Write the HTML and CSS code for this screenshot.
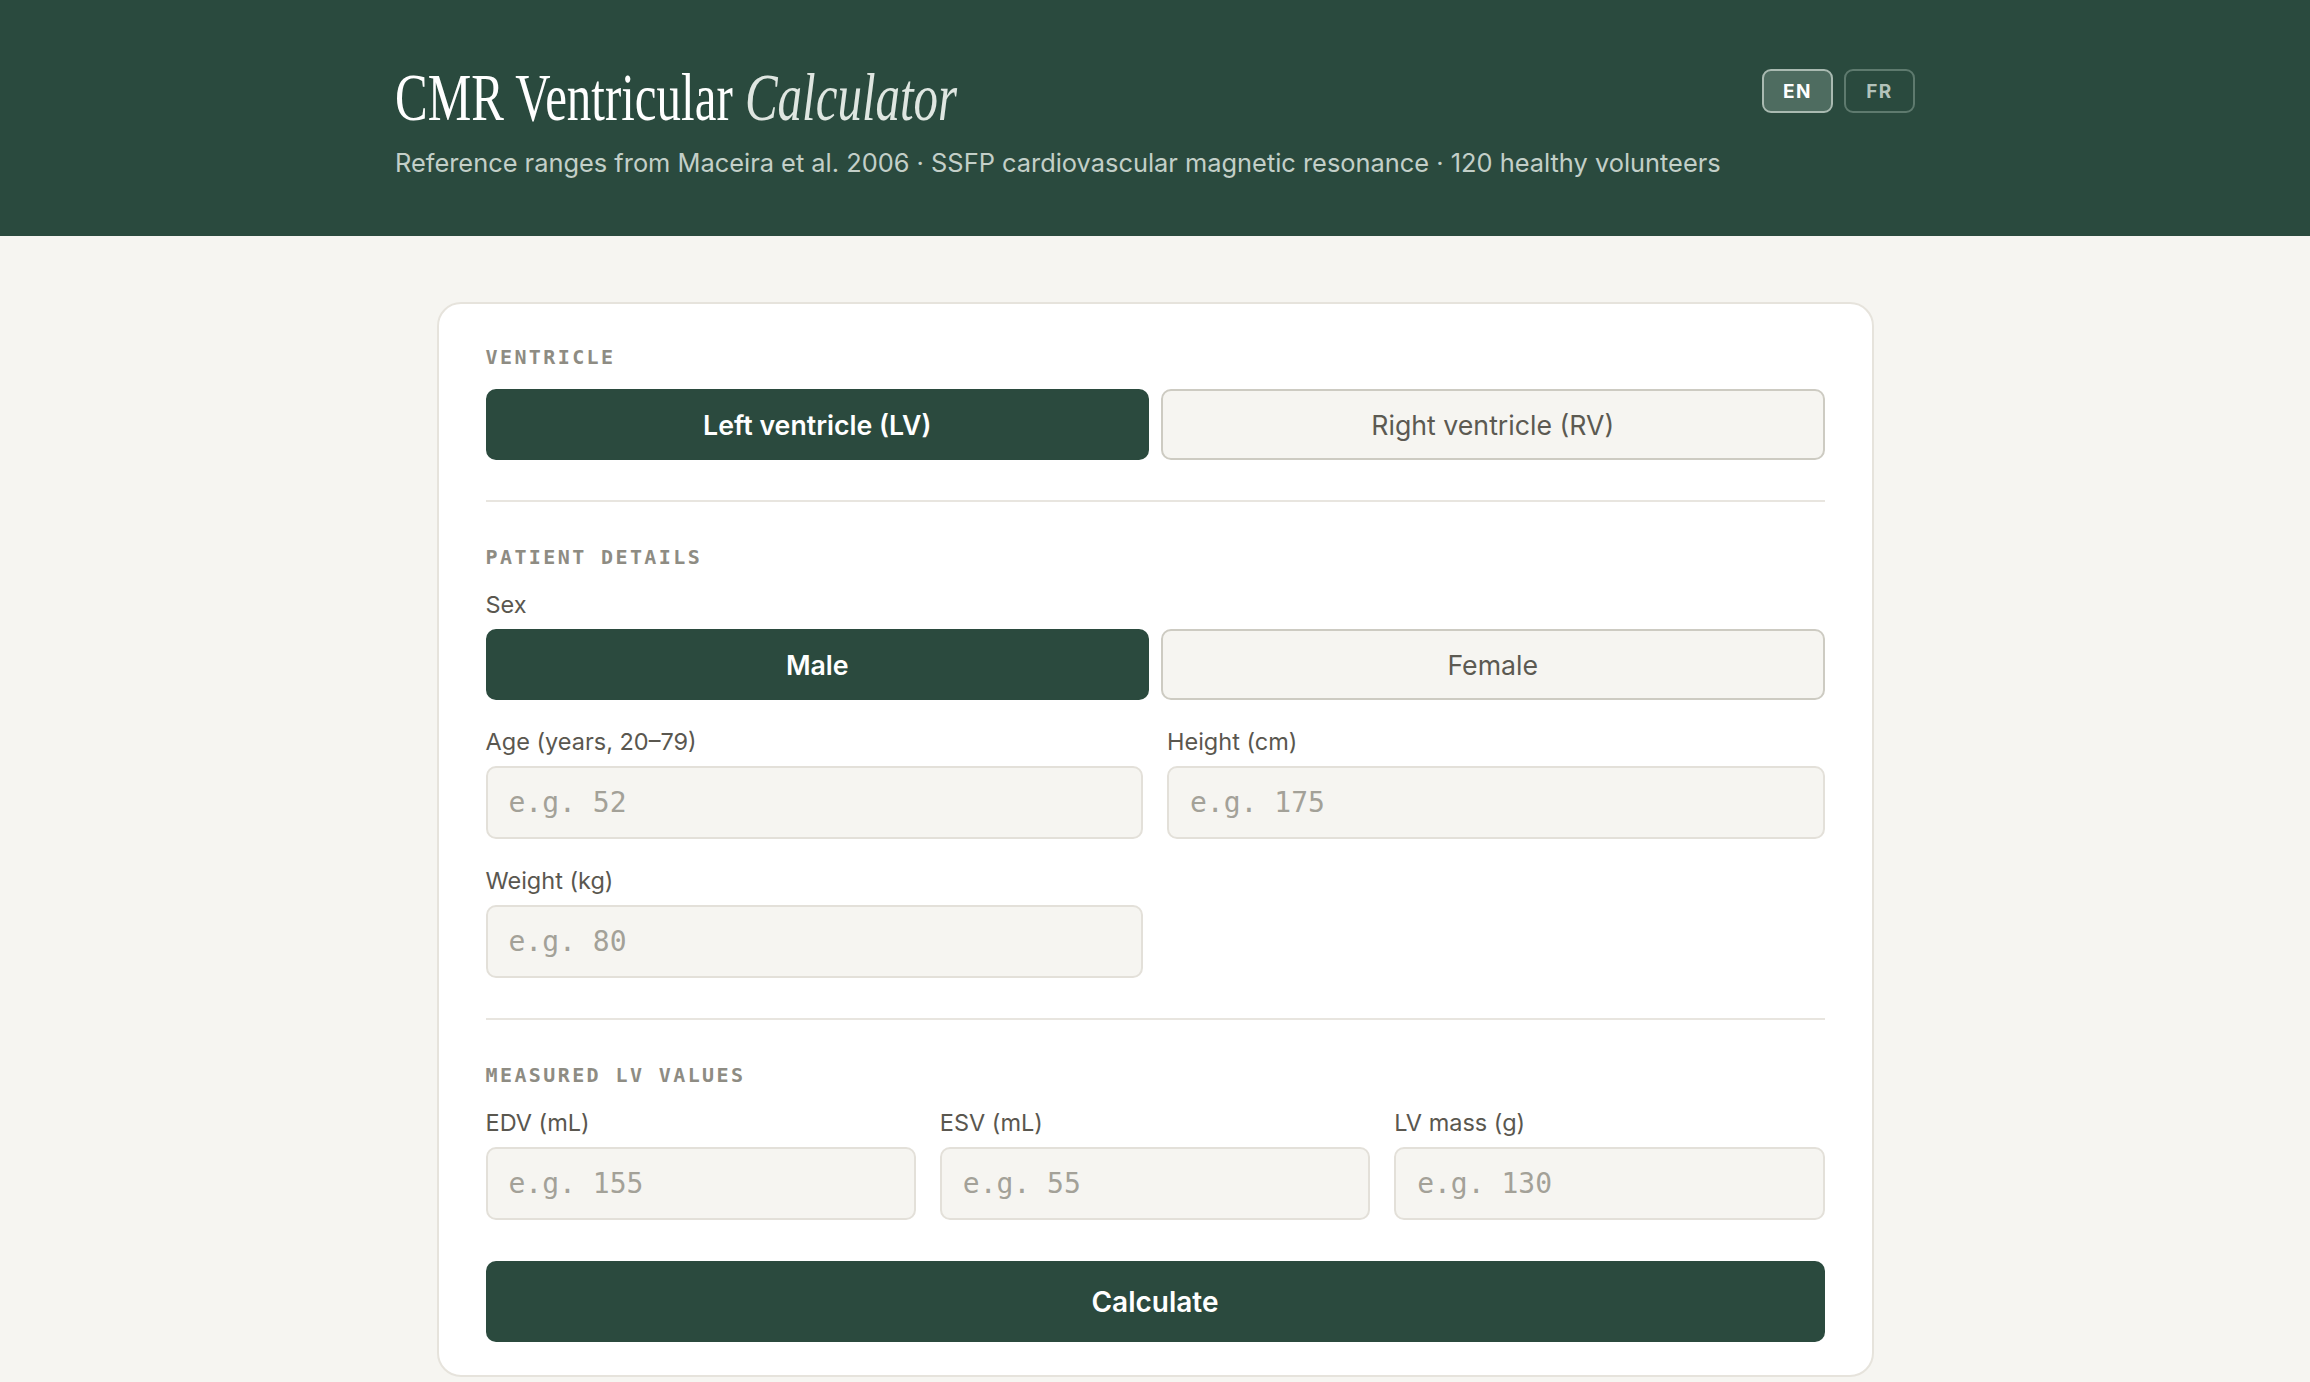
FILE: index.html
```html
<!DOCTYPE html>
<html lang="en">
<head>
<meta charset="utf-8">
<title>CMR Ventricular Calculator</title>
<link rel="stylesheet" href="styles.css">
</head>
<body>
<header class="top">
  <div class="top-inner">
    <div class="brand">
      <h1 class="title"><span class="title-text">CMR Ventricular <em>Calculator</em></span></h1>
      <p class="subtitle">Reference ranges from Maceira et al. 2006 · SSFP cardiovascular magnetic resonance · 120 healthy volunteers</p>
    </div>
    <div class="lang">
      <button class="lang-btn is-active">EN</button>
      <button class="lang-btn">FR</button>
    </div>
  </div>
</header>
<main class="main">
  <section class="card">
    <div class="section-label">VENTRICLE</div>
    <div class="toggle">
      <button class="toggle-btn is-active">Left ventricle (LV)</button>
      <button class="toggle-btn">Right ventricle (RV)</button>
    </div>
    <div class="divider"></div>
    <div class="section-label">PATIENT DETAILS</div>
    <div class="field-label">Sex</div>
    <div class="toggle">
      <button class="toggle-btn is-active">Male</button>
      <button class="toggle-btn">Female</button>
    </div>
    <div class="grid grid-2">
      <label class="field">
        <span class="field-label">Age (years, 20–79)</span>
        <input class="input" type="text" placeholder="e.g. 52">
      </label>
      <label class="field">
        <span class="field-label">Height (cm)</span>
        <input class="input" type="text" placeholder="e.g. 175">
      </label>
      <label class="field">
        <span class="field-label">Weight (kg)</span>
        <input class="input" type="text" placeholder="e.g. 80">
      </label>
    </div>
    <div class="divider"></div>
    <div class="section-label">MEASURED LV VALUES</div>
    <div class="grid grid-3">
      <label class="field">
        <span class="field-label">EDV (mL)</span>
        <input class="input" type="text" placeholder="e.g. 155">
      </label>
      <label class="field">
        <span class="field-label">ESV (mL)</span>
        <input class="input" type="text" placeholder="e.g. 55">
      </label>
      <label class="field">
        <span class="field-label">LV mass (g)</span>
        <input class="input" type="text" placeholder="e.g. 130">
      </label>
    </div>
    <button class="calc-btn">Calculate</button>
  </section>
</main>
</body>
</html>
```
FILE: styles.css
```css
* { box-sizing: border-box; }
html, body { margin: 0; padding: 0; }
body {
  background: #f6f5f1;
  font-family: "Inter", "Lato", sans-serif;
  color: #5a574f;
  height: 1382px;
  overflow: hidden;
}
.top {
  background: #2a4a3e;
  height: 236px;
  padding-top: 63px;
}
.top-inner {
  width: 1520px;
  margin: 0 auto;
  display: flex;
  justify-content: space-between;
  align-items: flex-start;
}
.title {
  margin: 0;
  font-family: "Liberation Serif", serif;
  font-weight: 400;
  font-size: 68px;
  line-height: 68px;
  color: #ffffff;
  white-space: nowrap;
}
.title-text {
  display: inline-block;
  transform: scaleX(0.72);
  transform-origin: left center;
}
.title em { color: #dfe6e1; }
.subtitle {
  margin: 17px 0 0;
  font-size: 25.4px;
  line-height: 30px;
  color: #c3cfc8;
}
.lang {
  display: flex;
  gap: 11px;
  margin-top: 6px;
}
.lang-btn {
  width: 71px;
  height: 44px;
  border-radius: 9px;
  border: 2px solid #5e7a6e;
  background: transparent;
  color: #b3c2ba;
  font-family: "Inter", sans-serif;
  font-weight: 700;
  font-size: 19px;
  letter-spacing: 1.5px;
  padding: 0;
}
.lang-btn.is-active {
  background: #4e6c60;
  border-color: #a9bab1;
  color: #ffffff;
}
.main { padding-top: 66px; }
.card {
  width: 1437px;
  margin: 0 auto;
  background: #ffffff;
  border: 2px solid #e6e3dc;
  border-radius: 24px;
  padding: 41px 47px 33px;
}
.section-label {
  font-family: "DejaVu Sans Mono", monospace;
  font-weight: 700;
  font-size: 20px;
  line-height: 24px;
  letter-spacing: 2.4px;
  color: #8e8c83;
  margin-bottom: 20px;
}
.field-label {
  display: block;
  font-size: 23.5px;
  line-height: 28px;
  padding-top: 2px;
  color: #5a574f;
  margin-bottom: 10px;
}
.toggle {
  display: grid;
  grid-template-columns: 1fr 1fr;
  gap: 12px;
}
.toggle-btn {
  height: 71px;
  border-radius: 10px;
  border: 2px solid #cdcbc2;
  background: #f6f5f1;
  color: #5c5a52;
  font-family: "Inter", sans-serif;
  font-size: 26.7px;
  font-weight: 400;
  padding: 0;
}
.toggle-btn.is-active {
  background: #2b4a3e;
  border-color: #2b4a3e;
  color: #ffffff;
  font-weight: 600;
}
.divider {
  height: 2px;
  background: #e8e5df;
  margin: 40px 0 43px;
}
.grid {
  display: grid;
  column-gap: 24px;
  row-gap: 26px;
  margin-top: 26px;
}
.section-label + .grid { margin-top: 0; }
.grid-2 { grid-template-columns: 1fr 1fr; }
.grid-3 { grid-template-columns: 1fr 1fr 1fr; }
.field { display: block; }
.input {
  display: block;
  width: 100%;
  height: 73px;
  border: 2px solid #e3e0d9;
  border-radius: 10px;
  background: #f6f5f1;
  padding: 0 21px;
  font-family: "DejaVu Sans Mono", monospace;
  font-size: 28px;
  color: #3a3a35;
  outline: none;
}
.input::placeholder { color: #a3a198; }
.calc-btn {
  display: block;
  width: 100%;
  height: 81px;
  margin-top: 41px;
  border: none;
  border-radius: 10px;
  background: #2b4a3e;
  color: #ffffff;
  font-family: "Inter", sans-serif;
  font-weight: 600;
  font-size: 28px;
}
```
